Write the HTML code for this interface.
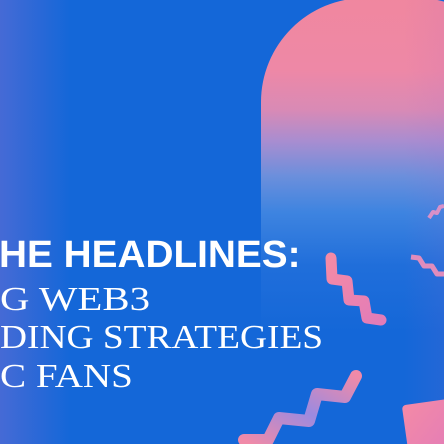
<!DOCTYPE html>
<html><head><meta charset="utf-8"><style>
html,body{margin:0;padding:0}
body{width:444px;height:444px;overflow:hidden;position:relative;background:#1467d8;font-family:"Liberation Sans",sans-serif}
.bg{position:absolute;inset:0;background:linear-gradient(90deg,rgba(130,110,210,.45) 0,rgba(20,103,216,0) 70px)}
.arch{position:absolute;left:261px;top:-2px;width:260px;height:446px;border-radius:104px 104px 0 0;
background:linear-gradient(180deg,#f0879f 0%,#ee88a6 16%,#d98ab5 25%,#a98dd0 32%,#6b8fdc 40%,#3e84e0 48%,rgba(40,115,220,.6) 60%,rgba(20,103,216,0) 75%)}
.arch2{position:absolute;left:261px;top:-2px;width:260px;height:446px;border-radius:104px 104px 0 0;
background:linear-gradient(90deg,rgba(0,0,0,0) 55%,rgba(170,100,200,.3) 100%)}
.t{position:absolute;color:#fff;white-space:nowrap;line-height:1;left:0}
.l1{font-weight:bold;font-size:38px;top:236px;left:-1px;transform:scaleX(1.02);transform-origin:left}
.s{font-family:"Liberation Serif",serif;font-size:34px;transform-origin:left}
.l2{top:283px;transform:scaleX(1.2)}
.l3{top:321px;transform:scaleX(1.1)}
.l4{top:360px;transform:scaleX(1.15)}
</style></head><body>
<div class="bg"></div>
<div class="arch"></div>
<div class="arch2"></div>
<svg width="444" height="444" style="position:absolute;left:0;top:0">
<defs>
<linearGradient id="g" x1="0" y1="0" x2="1" y2="1"><stop offset="0" stop-color="#f48aa6"/><stop offset="1" stop-color="#e27cb8"/></linearGradient>
<linearGradient id="g2" x1="0" y1="1" x2="1" y2="0"><stop offset="0" stop-color="#f08aa8"/><stop offset=".5" stop-color="#9c8ae0"/><stop offset="1" stop-color="#f08aa8"/></linearGradient>
</defs>
<polyline points="331,258 332,279 347,281 349,300 364,301 367,318 381,320" fill="none" stroke="url(#g)" stroke-width="11" stroke-linejoin="round" stroke-linecap="round"/>
<polyline points="244,440 268,440 279,418 309,421 317,394 345,397 356,376" fill="none" stroke="url(#g2)" stroke-width="12" stroke-linejoin="round" stroke-linecap="round"/>
<polyline points="429,218 433,212 437,213 440,207 444,206" fill="none" stroke="#d890c8" stroke-width="4" stroke-linejoin="round"/>
<polyline points="411,257 419,258 424,266 432,266 437,274 444,274" fill="none" stroke="#e08cbc" stroke-width="5" stroke-linejoin="round"/>
<rect x="404" y="403" width="50" height="50" rx="4" fill="url(#g)" transform="rotate(-8 420 420)"/>
</svg>
<div class="t l1">HE HEADLINES:</div>
<div class="t s l2">G WEB3</div>
<div class="t s l3">DING STRATEGIES</div>
<div class="t s l4">C FANS</div>
</body></html>
